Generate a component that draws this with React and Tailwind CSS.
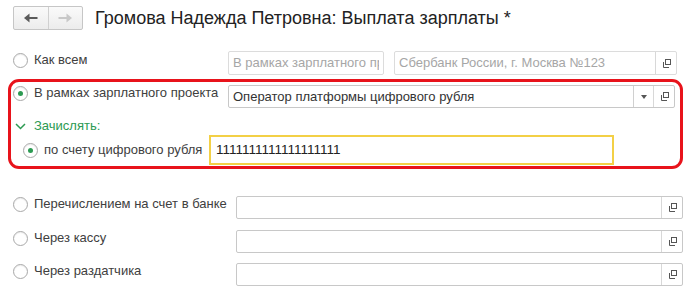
const font = { fontFamily: '"Liberation Sans", Arial, sans-serif' };

function Radio({ checked }) {
  return (
    <span className="flex h-[15px] w-[15px] shrink-0 items-center justify-center rounded-full border border-[#a9a9a9] bg-white shadow-[inset_0_1px_1px_rgba(0,0,0,0.08)]">
      {checked && <span className="h-[5px] w-[5px] rounded-full bg-[#2c9a52]" />}
    </span>
  );
}

function OpenIcon() {
  return (
    <svg width="11" height="11" viewBox="0 0 11 11" fill="none" stroke="#555" strokeWidth="1">
      <rect x="4.5" y="1.5" width="5" height="5" />
      <path d="M2.5 4v5.5H8" />
    </svg>
  );
}

function Arrow({ color, flip }) {
  return (
    <svg width="14" height="10" viewBox="0 0 14 10" className={flip ? 'rotate-180' : ''}>
      <path d="M0 5L5.5 0.5V9.5Z" fill={color} />
      <path d="M4 5H13.5" stroke={color} strokeWidth="2.2" />
    </svg>
  );
}

function Field({ className = '', text, placeholder, disabled, open, dropdown }) {
  return (
    <div
      className={`flex h-full items-stretch overflow-hidden rounded-[2px] border bg-white ${
        disabled ? 'border-[#dcdcdc]' : 'border-[#c8c8c8]'
      } ${className}`}
    >
      <div className="flex min-w-0 flex-1 items-center whitespace-nowrap px-[4px] text-[13px]">
        {text ? (
          <span className="text-[#333]">{text}</span>
        ) : (
          <span className="overflow-hidden text-[#a6a6a6]">{placeholder}</span>
        )}
      </div>
      {dropdown && (
        <div className="flex w-[20px] items-center justify-center border-l border-[#d0d0d0]">
          <span className="border-x-[3px] border-t-[4px] border-x-transparent border-t-[#555]" />
        </div>
      )}
      {open && (
        <div className="flex w-[21px] items-center justify-center border-l border-[#d8d8d8]">
          <OpenIcon />
        </div>
      )}
    </div>
  );
}

function Row({ label, checked, field, top }) {
  return (
    <div className={`flex h-[23px] items-start ${top}`}>
      <div className="flex w-[236px] shrink-0 items-center gap-[6px] pl-[13px] text-[13px] leading-[16px] text-[#404040]">
        <Radio checked={checked} />
        <span>{label}</span>
      </div>
      {field}
    </div>
  );
}

export default function App() {
  return (
    <div className="h-[294px] w-[700px] overflow-hidden bg-white" style={font}>
      <div className="flex items-center pl-[13px] pt-[6px]">
        <div className="flex h-[24px] w-[70px] overflow-hidden rounded-[2px] border border-[#c6c6c6] bg-gradient-to-b from-[#fafafa] to-[#ececec]">
          <div className="flex flex-1 items-center justify-center border-r border-[#d0d0d0]">
            <Arrow color="#5a5a5a" />
          </div>
          <div className="flex flex-1 items-center justify-center">
            <Arrow color="#c8c8c8" flip />
          </div>
        </div>
        <h1 className="ml-[12px] text-[18px] leading-[24px] text-[#222]">
          Громова Надежда Петровна: Выплата зарплаты *
        </h1>
      </div>

      <div className="mt-[21px] flex h-[24px] items-start">
        <div className="flex w-[228px] shrink-0 items-center gap-[6px] pl-[13px] pt-[1px] text-[13px] leading-[16px] text-[#404040]">
          <Radio />
          <span>Как всем</span>
        </div>
        <Field className="w-[156px]" placeholder="В рамках зарплатного проекта" disabled />
        <Field className="ml-[10px] w-[283px]" placeholder="Сбербанк России, г. Москва №123" disabled open />
      </div>

      <div className="ml-[8px] mt-[4px] h-[90px] w-[675px] rounded-[11px] border-[3px] border-[#e8131b]">
        <div className="mt-[3px] flex h-[23px] items-start">
          <div className="flex w-[217px] shrink-0 items-center gap-[6px] pl-[2px] text-[13px] leading-[16px] text-[#404040]">
            <Radio checked />
            <span>В рамках зарплатного проекта</span>
          </div>
          <Field className="w-[447px]" text="Оператор платформы цифрового рубля" dropdown open />
        </div>
        <div className="mt-[10px] flex h-[16px] items-center gap-[8px] pl-[4px] text-[13px] leading-[16px] text-[#2c9a52]">
          <svg width="11" height="7" viewBox="0 0 11 7" fill="none" stroke="#2c9a52" strokeWidth="1.5">
            <path d="M1 1l4.5 4.5L10 1" />
          </svg>
          <span>Зачислять:</span>
        </div>
        <div className="mt-[1px] flex h-[30px] items-center">
          <div className="flex w-[198px] shrink-0 items-center gap-[6px] pl-[12px] text-[13px] leading-[16px] text-[#404040]">
            <Radio checked />
            <span>по счету цифрового рубля</span>
          </div>
          <div className="flex h-[30px] w-[405px] items-center border-2 border-[#f3d046] px-[5px] text-[13.5px] text-[#222]">
            1111111111111111111
          </div>
        </div>
      </div>

      <Row
        top="mt-[27px]"
        label="Перечислением на счет в банке"
        field={<Field className="w-[447px]" open />}
      />
      <Row top="mt-[11px]" label="Через кассу" field={<Field className="w-[447px]" open />} />
      <Row top="mt-[10px]" label="Через раздатчика" field={<Field className="w-[447px]" open />} />
    </div>
  );
}
